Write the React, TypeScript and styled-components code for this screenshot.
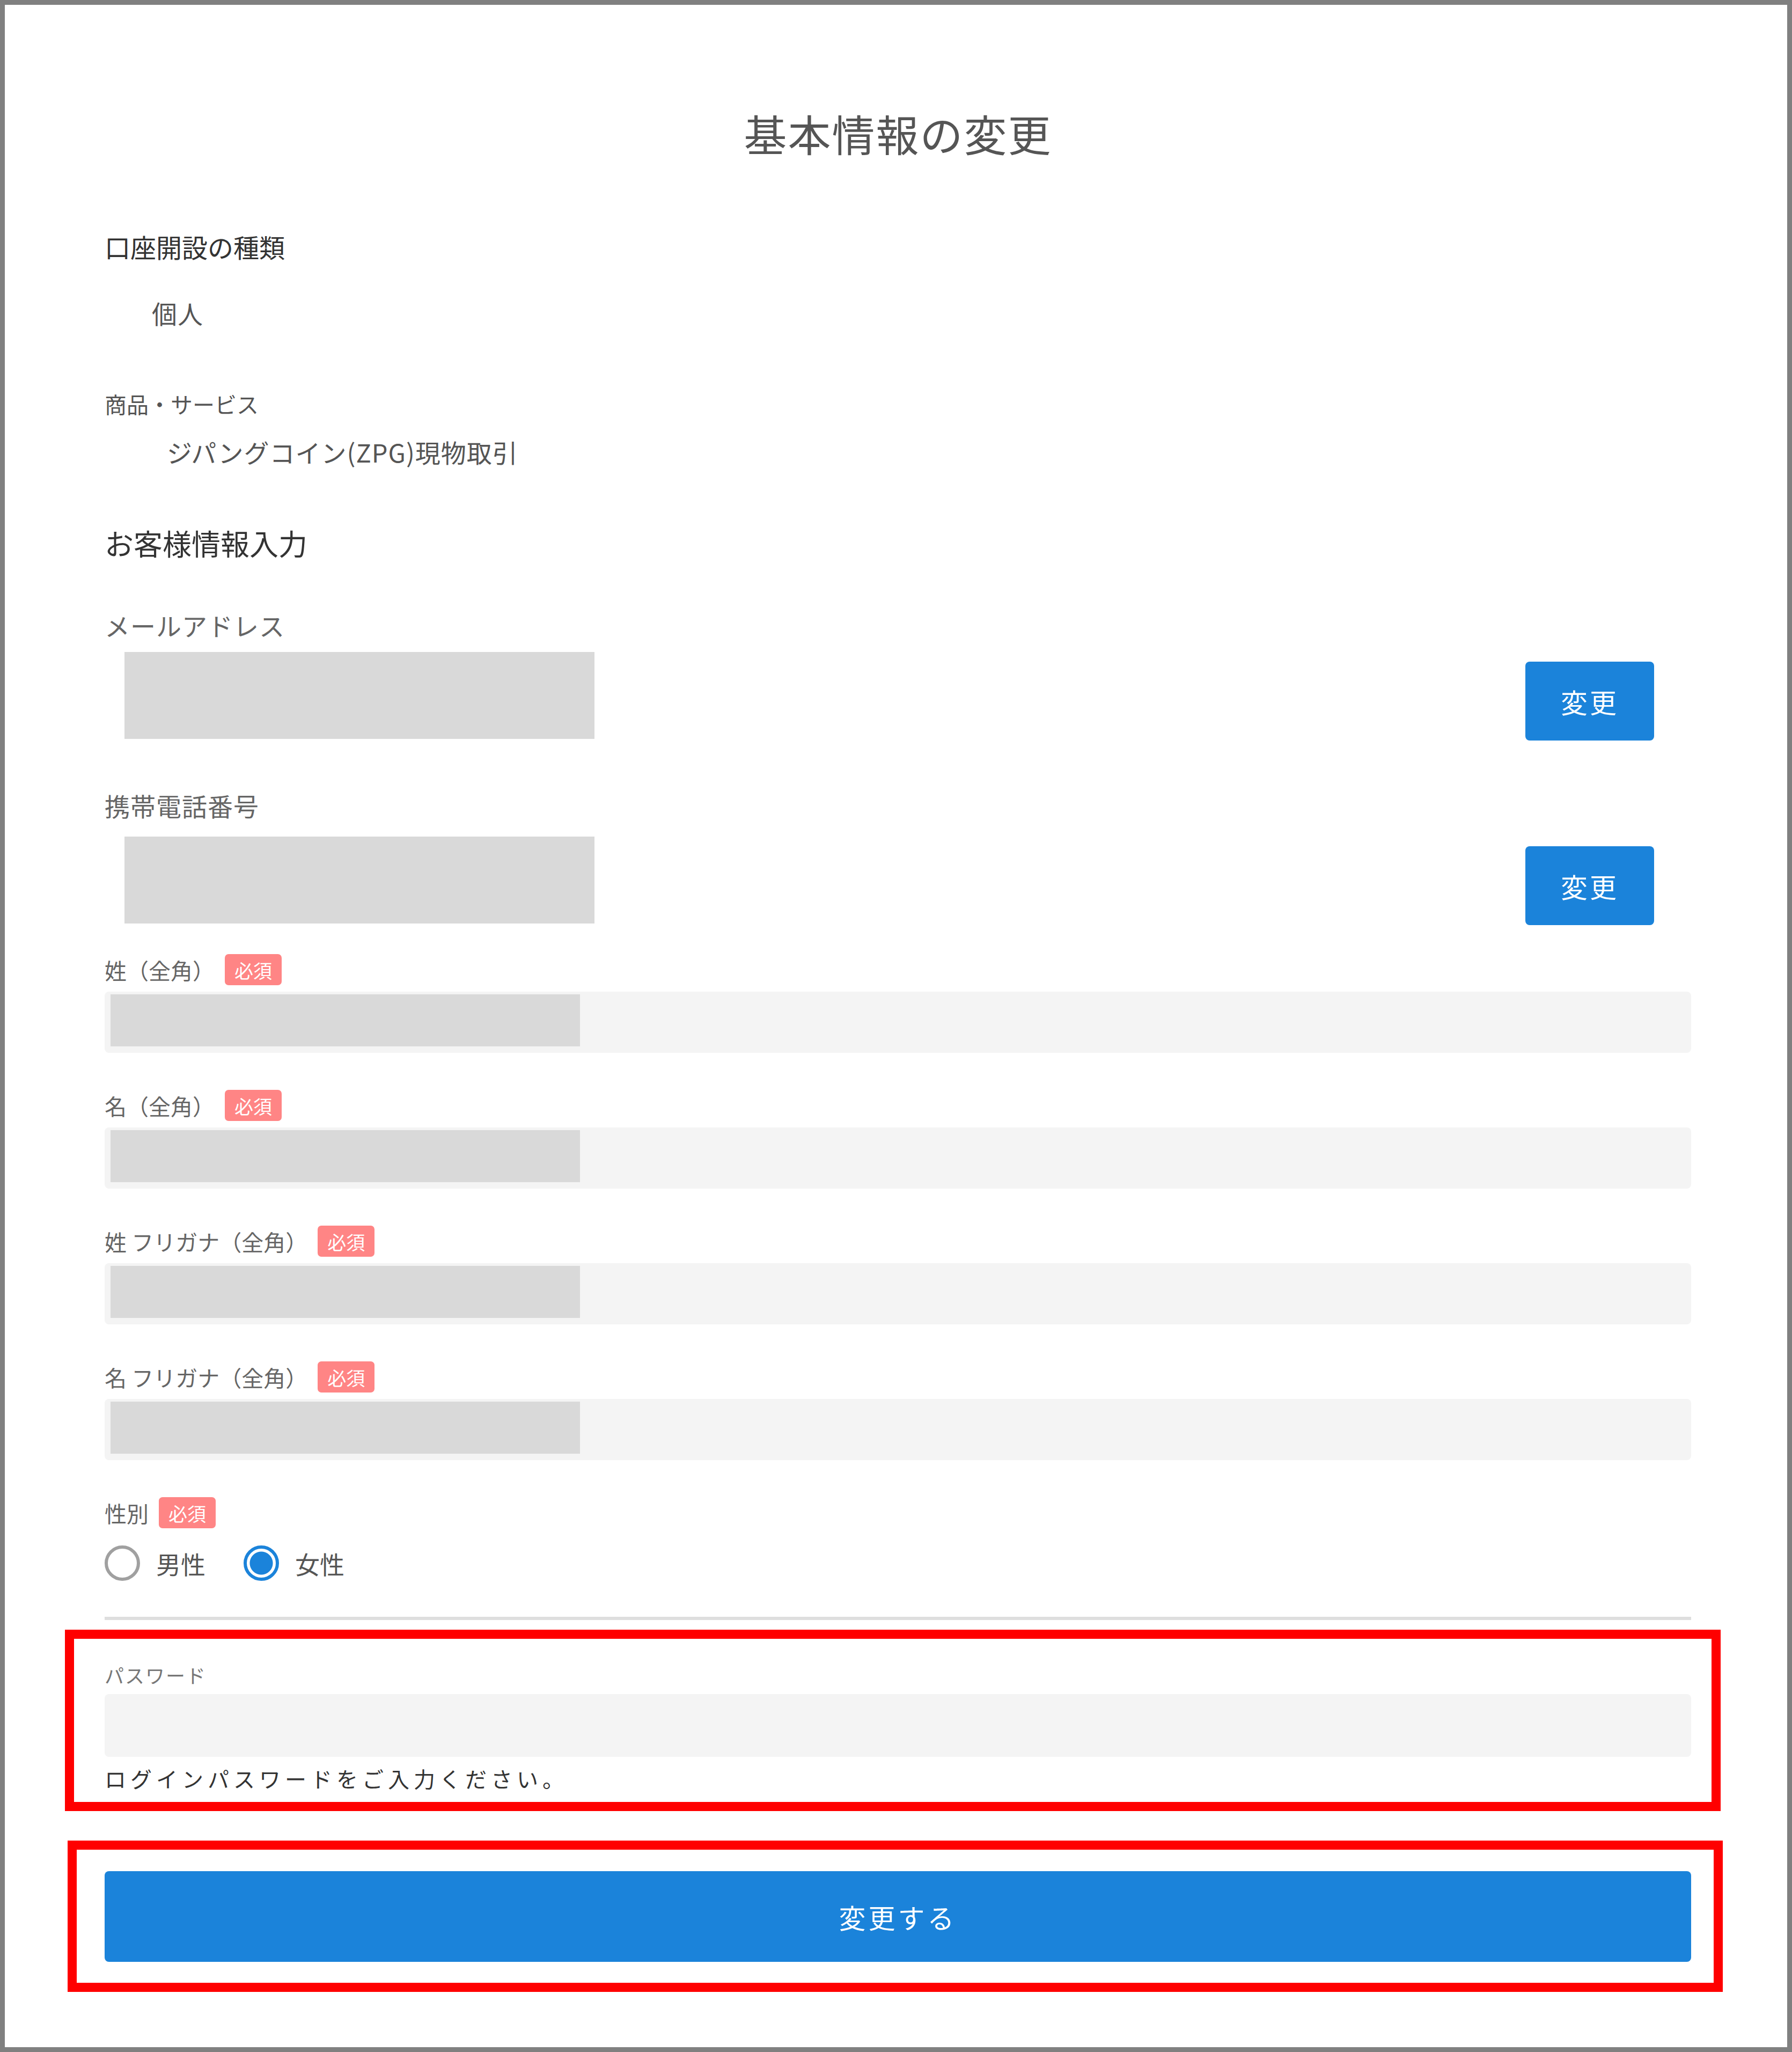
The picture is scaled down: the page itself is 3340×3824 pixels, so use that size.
import styled, { createGlobalStyle } from "styled-components";

const GlobalStyle = createGlobalStyle`
  html, body {
    margin: 0;
    padding: 0;
    background: #ffffff;
  }
  body {
    font-family: "Noto Sans CJK JP", "Noto Sans", sans-serif;
  }
`;

const fields = [
  { label: "姓（全角）" },
  { label: "名（全角）" },
  { label: "姓 フリガナ（全角）" },
  { label: "名 フリガナ（全角）" },
];

const App = () => {
  return (
    <>
      <GlobalStyle />
      <Frame>
        <Content>
          <Title>基本情報の変更</Title>

          <SectionLabel $mt={134}>口座開設の種類</SectionLabel>
          <Value $mt={64} $indent={88}>
            個人
          </Value>

          <SmallLabel $mt={111}>商品・サービス</SmallLabel>
          <Value $mt={32} $indent={116}>
            ジパングコイン(ZPG)現物取引
          </Value>

          <Heading>お客様情報入力</Heading>

          <FieldLabel $mt={91}>メールアドレス</FieldLabel>
          <ChangeRow $mt={20}>
            <Masked />
            <SmallButton>変更</SmallButton>
          </ChangeRow>

          <FieldLabel $mt={91}>携帯電話番号</FieldLabel>
          <ChangeRow $mt={28}>
            <Masked />
            <SmallButton>変更</SmallButton>
          </ChangeRow>

          {fields.map((f, i) => (
            <Field key={f.label} $mt={i === 0 ? 54 : 69}>
              <LabelRow>
                <FieldText>{f.label}</FieldText>
                <Badge>必須</Badge>
              </LabelRow>
              <InputBox>
                <MaskedValue />
              </InputBox>
            </Field>
          ))}

          <Field $mt={69}>
            <LabelRow>
              <FieldText>性別</FieldText>
              <Badge>必須</Badge>
            </LabelRow>
            <RadioGroup>
              <RadioOption>
                <RadioCircle />
                <RadioText>男性</RadioText>
              </RadioOption>
              <RadioOption>
                <RadioCircle $checked />
                <RadioText>女性</RadioText>
              </RadioOption>
            </RadioGroup>
          </Field>

          <Divider />

          <Highlight $mt={18} $left={74} $right={55} $pt={42} $pb={16}>
            <PasswordLabel>パスワード</PasswordLabel>
            <PasswordInput />
            <Hint>ログインパスワードをご入力ください。</Hint>
          </Highlight>

          <Highlight $mt={55} $left={69} $right={59} $pt={40} $pb={39}>
            <SubmitButton>変更する</SubmitButton>
          </Highlight>
        </Content>
      </Frame>
    </>
  );
};

const Frame = styled.div`
  width: 3340px;
  height: 3824px;
  box-sizing: border-box;
  border: 9px solid #808080;
  background: #ffffff;
  overflow: hidden;
`;

const Content = styled.div`
  display: flex;
  flex-direction: column;
  padding: 190px 179px 0 186px;
`;

const Title = styled.h1`
  margin: 0;
  height: 96px;
  line-height: 96px;
  text-align: center;
  font-size: 80px;
  font-weight: 400;
  letter-spacing: 2px;
  color: #555555;
`;

const SectionLabel = styled.div<{ $mt: number }>`
  margin-top: ${(p) => p.$mt}px;
  height: 60px;
  line-height: 60px;
  font-size: 48px;
  color: #333333;
`;

const Value = styled.div<{ $mt: number; $indent: number }>`
  margin-top: ${(p) => p.$mt}px;
  padding-left: ${(p) => p.$indent}px;
  height: 60px;
  line-height: 60px;
  font-size: 47px;
  letter-spacing: 1px;
  color: #555555;
`;

const SmallLabel = styled.div<{ $mt: number }>`
  margin-top: ${(p) => p.$mt}px;
  height: 56px;
  line-height: 56px;
  font-size: 41px;
  color: #555555;
`;

const Heading = styled.h2`
  margin: 108px 0 0;
  height: 64px;
  line-height: 64px;
  font-size: 54px;
  font-weight: 400;
  color: #333333;
`;

const FieldLabel = styled.div<{ $mt: number }>`
  margin-top: ${(p) => p.$mt}px;
  height: 60px;
  line-height: 60px;
  font-size: 47px;
  letter-spacing: 1px;
  color: #666666;
`;

const ChangeRow = styled.div<{ $mt: number }>`
  margin-top: ${(p) => p.$mt}px;
  display: flex;
  align-items: flex-start;
  justify-content: space-between;
  padding: 0 69px 0 37px;
`;

const Masked = styled.div`
  width: 876px;
  height: 162px;
  background: #d9d9d9;
`;

const SmallButton = styled.button`
  margin-top: 18px;
  width: 240px;
  height: 147px;
  border: none;
  border-radius: 8px;
  background: #1b83da;
  color: #ffffff;
  font-family: inherit;
  font-size: 50px;
  letter-spacing: 4px;
  padding: 0;
`;

const Field = styled.div<{ $mt: number }>`
  margin-top: ${(p) => p.$mt}px;
  display: flex;
  flex-direction: column;
`;

const LabelRow = styled.div`
  display: flex;
  align-items: center;
  gap: 19px;
  height: 58px;
`;

const FieldText = styled.span`
  font-size: 41px;
  line-height: 58px;
  color: #666666;
  white-space: pre;
`;

const Badge = styled.span`
  display: inline-flex;
  align-items: center;
  justify-content: center;
  height: 58px;
  padding: 0 18px;
  border-radius: 7px;
  background: #ff8585;
  color: #ffffff;
  font-size: 35px;
`;

const InputBox = styled.div`
  margin-top: 12px;
  height: 114px;
  box-sizing: border-box;
  padding: 5px 11px 12px;
  background: #f4f4f4;
  border-radius: 8px;
  display: flex;
`;

const MaskedValue = styled.div`
  width: 875px;
  background: #d9d9d9;
`;

const RadioGroup = styled.div`
  margin-top: 32px;
  display: flex;
  align-items: center;
  gap: 71px;
`;

const RadioOption = styled.label`
  display: flex;
  align-items: center;
  gap: 30px;
`;

const RadioCircle = styled.span<{ $checked?: boolean }>`
  box-sizing: border-box;
  width: 66px;
  height: 66px;
  border-radius: 50%;
  border: 6px solid ${(p) => (p.$checked ? "#1b83da" : "#a0a0a0")};
  background: ${(p) =>
    p.$checked
      ? "radial-gradient(circle, #1b83da 0 21px, #ffffff 22px)"
      : "#ffffff"};
`;

const RadioText = styled.span`
  font-size: 46px;
  line-height: 60px;
  color: #555555;
`;

const Divider = styled.hr`
  margin: 67px 0 0;
  border: none;
  height: 6px;
  background: #dedede;
`;

const Highlight = styled.div<{
  $mt: number;
  $left: number;
  $right: number;
  $pt: number;
  $pb: number;
}>`
  margin: ${(p) => p.$mt}px -${(p) => p.$right}px 0 -${(p) => p.$left}px;
  border: 17px solid #ff0000;
  padding: ${(p) => p.$pt}px ${(p) => p.$right - 17}px ${(p) => p.$pb}px
    ${(p) => p.$left - 17}px;
  display: flex;
  flex-direction: column;
`;

const PasswordLabel = styled.div`
  height: 50px;
  line-height: 50px;
  font-size: 36px;
  letter-spacing: 2px;
  color: #777777;
`;

const PasswordInput = styled.div`
  margin-top: 11px;
  height: 117px;
  background: #f4f4f4;
  border-radius: 8px;
`;

const Hint = styled.div`
  margin-top: 12px;
  height: 56px;
  line-height: 56px;
  font-size: 40px;
  letter-spacing: 8px;
  color: #333333;
`;

const SubmitButton = styled.button`
  height: 169px;
  border: none;
  border-radius: 8px;
  background: #1b83da;
  color: #ffffff;
  font-family: inherit;
  font-size: 50px;
  letter-spacing: 5px;
  padding: 0;
`;

export default App;
